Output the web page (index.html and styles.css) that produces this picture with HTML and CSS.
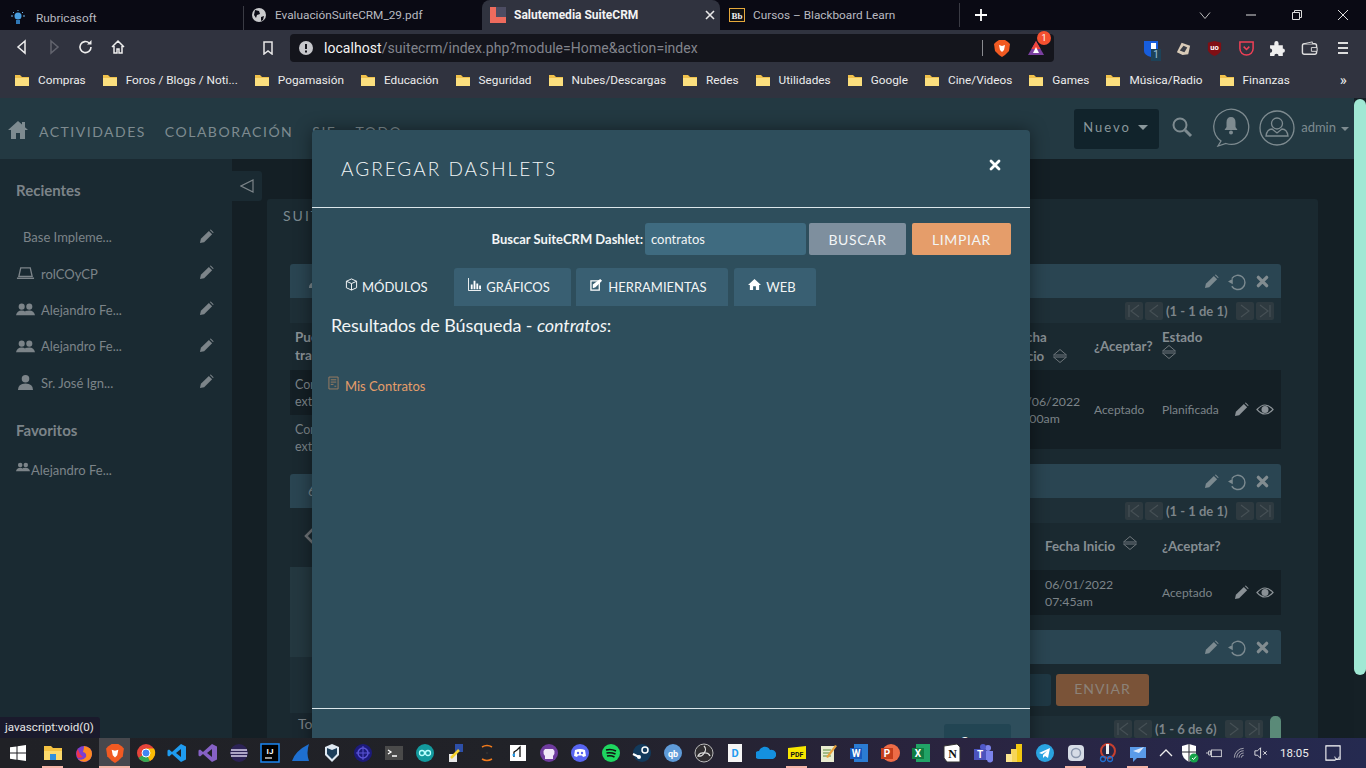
FILE: index.html
```html
<!DOCTYPE html>
<html>
<head>
  <title>Salutemedia SuiteCRM</title>
  <link rel="stylesheet" href="styles.css">
</head>
<body>
  <svg class="defs" width="0" height="0">
    <symbol id="folder" viewBox="0 0 16 16"><path d="M1 3h5l2 2h7v9H1z" fill="#f0c14b"/><path d="M1 6h14v8H1z" fill="#fbdf7e"/></symbol>
    <symbol id="pencil" viewBox="0 0 16 16"><path d="M1 15l1-4.500L10.500 2l3.500 3.500L5.500 14z" fill="currentColor"/><path d="M11.500 1l1-.5 3 3-.5 1z" fill="currentColor"/></symbol>
    <symbol id="refresh" viewBox="0 0 20 20"><path d="M4 7a7.500 7.500 0 1 1 0 8" fill="none" stroke="currentColor" stroke-width="1.500"/><path d="M0 10l5-3v6z" fill="currentColor"/></symbol>
    <symbol id="cross" viewBox="0 0 14 14"><path d="M2.500 2.500l9 9M11.500 2.500l-9 9" stroke="currentColor" stroke-width="3.500" stroke-linecap="round"/></symbol>
    <symbol id="eye" viewBox="0 0 18 12"><path d="M1 6q8-9 16 0q-8 9-16 0z" fill="none" stroke="currentColor" stroke-width="1.200"/><circle cx="9" cy="6" r="3.500" fill="currentColor"/></symbol>
    <symbol id="sort" viewBox="0 0 14 14"><path d="M7 .5l6.500 5.500H.5zM.5 8h13L7 13.500z" fill="none" stroke="currentColor"/></symbol>
    <symbol id="first" viewBox="0 0 18 18"><path d="M4 3v12M14 3L6 9l8 6" fill="none" stroke="#465055" stroke-width="1.200"/></symbol>
    <symbol id="prev" viewBox="0 0 18 18"><path d="M13 3L5 9l8 6" fill="none" stroke="#465055" stroke-width="1.200"/></symbol>
    <symbol id="next" viewBox="0 0 18 18"><path d="M5 3l8 6-8 6" fill="none" stroke="#465055" stroke-width="1.200"/></symbol>
    <symbol id="last" viewBox="0 0 18 18"><path d="M14 3v12M4 3l8 6-8 6" fill="none" stroke="#465055" stroke-width="1.200"/></symbol>
    <symbol id="people" viewBox="0 0 20 14"><circle cx="6" cy="4" r="3.200" fill="currentColor"/><circle cx="14" cy="4" r="3.200" fill="currentColor"/><path d="M0 13q1-5 6-5t5 5zM11 13q-.5-3-1.500-4.500Q11 8 14 8q5 0 6 5z" fill="currentColor"/></symbol>
    <symbol id="person" viewBox="0 0 18 18"><circle cx="9" cy="5" r="4" fill="currentColor"/><path d="M1 17q0-7 8-7t8 7z" fill="currentColor"/></symbol>
  </svg>

  <div class="tabstrip">
    <div class="tab tab-first">
      <svg class="favicon" viewBox="0 0 16 16"><circle cx="8" cy="6" r="3.500" fill="#4a9fe0"/><path d="M6 10h4v4H6z" fill="#2f77b5"/><path d="M1 6h2M13 6h2M8 0v1M3 2l1 1M13 2l-1 1" stroke="#6fb5e8"/></svg>
      <span>Rubricasoft</span>
    </div>
    <div class="tab tab-second">
      <svg class="favicon" viewBox="0 0 16 16"><circle cx="8" cy="8" r="7" fill="#c9cacc"/><path d="M4 3l4 1 1 3-3 1-1 3-2-3zM10 10l3-1-1 4-2 1z" fill="#0b0b15"/></svg>
      <span>EvaluaciónSuiteCRM_29.pdf</span>
    </div>
    <div class="tab tab-active">
      <svg class="favicon" viewBox="0 0 16 16"><path d="M0 0h6v10h10v6H0z" fill="#ee6b5d"/><path d="M6 0h10v10H6z" fill="#4d4d63"/></svg>
      <span>Salutemedia SuiteCRM</span>
      <svg class="tab-close" viewBox="0 0 10 10"><path d="M1 1l8 8M9 1L1 9" stroke="#e8e8e8" stroke-width="1.600"/></svg>
    </div>
    <div class="tab tab-last">
      <svg class="favicon" viewBox="0 0 16 16"><rect x=".5" y="1.500" width="15" height="13" fill="#111" stroke="#e5a83b"/><text x="8" y="11.500" class="bb">Bb</text></svg>
      <span>Cursos – Blackboard Learn</span>
    </div>
    <svg class="new-tab" viewBox="0 0 12 12"><path d="M6 0v12M0 6h12" stroke="#fff" stroke-width="1.800"/></svg>
    <div class="win-controls">
      <svg viewBox="0 0 12 12"><path d="M1 3.500l5 6 5-6" fill="none" stroke="#bbb"/></svg>
      <svg viewBox="0 0 12 12"><path d="M1 6h10" stroke="#ddd"/></svg>
      <svg viewBox="0 0 12 12"><path d="M1.500 3.500h7v7h-7zM3.500 3.500v-2h7v7h-2" fill="none" stroke="#ddd"/></svg>
      <svg viewBox="0 0 12 12"><path d="M1 1l10 10M11 1L1 11" stroke="#ddd"/></svg>
    </div>
  </div>

  <div class="toolbar">
    <svg class="nav-ico" viewBox="0 0 16 16"><path d="M11 2L4 8l7 6z" fill="none" stroke="#eee" stroke-width="1.500"/></svg>
    <svg class="nav-ico" viewBox="0 0 16 16"><path d="M5 2l7 6-7 6z" fill="none" stroke="#62646e" stroke-width="1.500"/></svg>
    <svg class="nav-ico" viewBox="0 0 16 16"><path d="M13 8a5.500 5.500 0 1 1-1.800-4" fill="none" stroke="#eee" stroke-width="1.600"/><path d="M13.500 1v4.500H9z" fill="#eee"/></svg>
    <svg class="nav-ico" viewBox="0 0 16 16"><path d="M2 8l6-6 6 6M4 7v7h3v-4h2v4h3V7" fill="none" stroke="#eee" stroke-width="1.500"/></svg>
    <svg class="bookmark-ico" viewBox="0 0 12 14"><path d="M2 1h8v12l-4-3-4 3z" fill="none" stroke="#e8e8e8" stroke-width="1.500"/></svg>
    <div class="omnibox">
      <svg class="info-ico" viewBox="0 0 14 14"><circle cx="7" cy="7" r="7" fill="#c6c7cb"/><path d="M6 3h2v5H6zM6 9.500h2v2H6z" fill="#14151c"/></svg>
      <span class="url"><b>localhost</b>/suitecrm/index.php?module=Home&amp;action=index</span>
      <span class="omni-sep"></span>
      <svg class="brave-ico" viewBox="0 0 16 18"><path d="M2 3l3-2h6l3 2 2 2-1 7-4 4-3 2-3-2-4-4L0 5z" fill="#f15a22"/><path d="M5 6l3 1 3-1-1 5-2 2-2-2z" fill="#fff"/></svg>
      <span class="rewards">
        <svg viewBox="0 0 18 16"><path d="M9 1l8 14H1z" fill="#7a3fa0"/><path d="M9 1l4.500 8h-9z" fill="#f0453a"/><path d="M9 7l3 6H6z" fill="#fff"/></svg>
        <span class="rewards-badge">1</span>
      </span>
    </div>
    <div class="extensions">
      <span class="ext ext-bw">
        <svg viewBox="0 0 16 18"><path d="M1 1h14v10q0 4-7 6-7-2-7-6z" fill="#175ddc"/><path d="M8 3h5v8q0 2-5 4z" fill="#fff"/></svg>
        <span class="ext-badge">1</span>
      </span>
      <svg class="ext" viewBox="0 0 18 16"><path d="M2 12L7 2l9 3-2 9-6 1z" fill="#d9cbb8"/><path d="M5 10l4-5 4 2-3 5z" fill="#3a3d46"/></svg>
      <svg class="ext" viewBox="0 0 16 18"><path d="M8 1l7 2v8q-2 4-7 6-5-2-7-6V3z" fill="#800f14"/><text x="8" y="11" class="ub">uo</text></svg>
      <svg class="ext" viewBox="0 0 18 18"><path d="M2 2h14v7a7 7 0 0 1-14 0z" fill="none" stroke="#ef4056" stroke-width="1.600"/><path d="M6 7l3 3 3-3" fill="none" stroke="#ef4056" stroke-width="1.600"/></svg>
      <svg class="ext" viewBox="0 0 16 16"><path d="M1 5h4V3a2 2 0 0 1 4 0v2h4v3a2 2 0 0 1 0 4v3H9a2 2 0 0 0-4 0H1v-3a2 2 0 0 0 0-4z" fill="#eee"/></svg>
      <svg class="ext" viewBox="0 0 18 16"><rect x="1.500" y="3" width="15" height="11" rx="2" fill="none" stroke="#ddd" stroke-width="1.500"/><path d="M3 3l9-2v2M11 7h6v4h-6z" fill="#30333f" stroke="#ddd"/></svg>
      <svg class="ext ext-menu" viewBox="0 0 14 14"><path d="M2 2h10M2 7h10M2 12h10" stroke="#ddd" stroke-width="1.800"/></svg>
    </div>
  </div>

  <div class="bookmarks">
    <span class="bm"><svg><use href="#folder"/></svg>Compras</span>
    <span class="bm"><svg><use href="#folder"/></svg>Foros / Blogs / Noti...</span>
    <span class="bm"><svg><use href="#folder"/></svg>Pogamasión</span>
    <span class="bm"><svg><use href="#folder"/></svg>Educación</span>
    <span class="bm"><svg><use href="#folder"/></svg>Seguridad</span>
    <span class="bm"><svg><use href="#folder"/></svg>Nubes/Descargas</span>
    <span class="bm"><svg><use href="#folder"/></svg>Redes</span>
    <span class="bm"><svg><use href="#folder"/></svg>Utilidades</span>
    <span class="bm"><svg><use href="#folder"/></svg>Google</span>
    <span class="bm"><svg><use href="#folder"/></svg>Cine/Videos</span>
    <span class="bm"><svg><use href="#folder"/></svg>Games</span>
    <span class="bm"><svg><use href="#folder"/></svg>Música/Radio</span>
    <span class="bm"><svg><use href="#folder"/></svg>Finanzas</span>
    <span class="bm-more">»</span>
  </div>

  <div class="app">
    <div class="crm">
      <div class="topnav">
        <svg class="home-ico" viewBox="0 0 20 20"><path d="M10 1L0 10h3v9h5v-6h4v6h5v-9h3l-3-2.700V2h-3v2.600z" fill="currentColor"/></svg>
        <a>ACTIVIDADES</a>
        <a>COLABORACIÓN</a>
        <a>SIE</a>
        <a>TODO</a>
        <div class="nav-right">
          <div class="nuevo"><span class="nuevo-text">Nuevo</span><span class="caret"></span></div>
          <svg class="search-ico" viewBox="0 0 22 22"><circle cx="9" cy="9" r="6.500" fill="none" stroke="currentColor" stroke-width="2"/><path d="M14 14l6 6" stroke="currentColor" stroke-width="3"/></svg>
          <svg class="bell-ico" viewBox="0 0 38 40"><path d="M9 34A17.500 17.500 0 1 1 14 36.500L6 39z" fill="none" stroke="currentColor" stroke-width="1.300"/><path d="M19 10q4.500 0 4.500 5.500v4.500l2 3h-13l2-3v-4.500q0-5.500 4.500-5.500z" fill="currentColor"/><circle cx="19" cy="25.500" r="2" fill="currentColor"/></svg>
          <svg class="user-ico" viewBox="0 0 36 36"><circle cx="18" cy="18" r="17" fill="none" stroke="currentColor" stroke-width="1.300"/><circle cx="18" cy="13.500" r="5.500" fill="none" stroke="currentColor" stroke-width="1.300"/><path d="M7 26q1-7 6-7l5 4 5-4q5 0 6 7z" fill="none" stroke="currentColor" stroke-width="1.300"/></svg>
          <span class="admin">admin<span class="caret caret-small"></span></span>
        </div>
      </div>

      <div class="crm-body">
        <aside class="sidebar">
          <h3>Recientes</h3>
          <div class="side-item side-plain"><span>Base Impleme...</span><svg class="side-pencil"><use href="#pencil"/></svg></div>
          <div class="side-item"><svg class="side-ico" viewBox="0 0 20 14"><path d="M5 1h10l2 9H3zM1 12h18" fill="none" stroke="currentColor" stroke-width="1.400"/></svg><span>rolCOyCP</span><svg class="side-pencil"><use href="#pencil"/></svg></div>
          <div class="side-item"><svg class="side-ico"><use href="#people"/></svg><span>Alejandro Fe...</span><svg class="side-pencil"><use href="#pencil"/></svg></div>
          <div class="side-item"><svg class="side-ico"><use href="#people"/></svg><span>Alejandro Fe...</span><svg class="side-pencil"><use href="#pencil"/></svg></div>
          <div class="side-item"><svg class="side-ico"><use href="#person"/></svg><span>Sr. José Ign...</span><svg class="side-pencil"><use href="#pencil"/></svg></div>
          <h3 class="side-fav">Favoritos</h3>
          <div class="fav-item"><svg class="fav-ico"><use href="#people"/></svg><span>Alejandro Fe...</span></div>
        </aside>

        <main class="content">
          <div class="toggle"><svg viewBox="0 0 14 14"><path d="M13 1v12L1 7z" fill="none" stroke="currentColor" stroke-width="1.200"/></svg></div>
          <div class="panel">
            <div class="panel-title">SUITECRM DASHBOARD</div>
            <div class="columns">
              <div class="col">
                <div class="dashlet">
                  <div class="dash-head"><svg class="dash-ico"><use href="#person"/></svg></div>
                  <div class="pager"></div>
                  <div class="left-head">Puesto de<br>trabajo</div>
                  <div class="left-row left-row-dark">Contrato<br>externo</div>
                  <div class="left-row">Contrato<br>externo</div>
                </div>
                <div class="dashlet">
                  <div class="dash-head"><span class="dash-letter">6</span></div>
                  <div class="cal-nav"><svg viewBox="0 0 10 16"><path d="M9 1L2 8l7 7" fill="none" stroke="currentColor" stroke-width="2.500"/></svg></div>
                  <div class="cal-box"></div>
                  <div class="cal-foot"></div>
                  <div class="cal-total">Total</div>
                </div>
              </div>

              <div class="col">
                <div class="dashlet">
                  <div class="dash-head dash-tools">
                    <svg class="tool-pencil"><use href="#pencil"/></svg>
                    <svg class="tool-refresh"><use href="#refresh"/></svg>
                    <svg class="tool-cross"><use href="#cross"/></svg>
                  </div>
                  <div class="pager">
                    <svg><use href="#first"/></svg><svg><use href="#prev"/></svg>
                    <span>(1 - 1 de 1)</span>
                    <svg class="pager-next"><use href="#next"/></svg><svg><use href="#last"/></svg>
                  </div>
                  <div class="t-head t-four">
                    <span></span>
                    <span class="th-sort">Fecha<br>Inicio<svg><use href="#sort"/></svg></span>
                    <span>¿Aceptar?</span>
                    <span class="th-stack">Estado<svg><use href="#sort"/></svg></span>
                    <span></span>
                  </div>
                  <div class="t-row t-four t-tall">
                    <span></span>
                    <span>01/06/2022<br>08:00am</span>
                    <span>Aceptado</span>
                    <span>Planificada</span>
                    <span class="acts"><svg class="act-pencil"><use href="#pencil"/></svg><svg class="act-eye"><use href="#eye"/></svg></span>
                  </div>
                </div>
                <div class="dashlet">
                  <div class="dash-head dash-tools">
                    <svg class="tool-pencil"><use href="#pencil"/></svg>
                    <svg class="tool-refresh"><use href="#refresh"/></svg>
                    <svg class="tool-cross"><use href="#cross"/></svg>
                  </div>
                  <div class="pager">
                    <svg><use href="#first"/></svg><svg><use href="#prev"/></svg>
                    <span>(1 - 1 de 1)</span>
                    <svg class="pager-next"><use href="#next"/></svg><svg><use href="#last"/></svg>
                  </div>
                  <div class="t-head t-three">
                    <span></span>
                    <span class="th-inline">Fecha Inicio<svg><use href="#sort"/></svg></span>
                    <span>¿Aceptar?</span>
                    <span></span>
                  </div>
                  <div class="t-row t-three">
                    <span></span>
                    <span>06/01/2022<br>07:45am</span>
                    <span>Aceptado</span>
                    <span class="acts"><svg class="act-pencil"><use href="#pencil"/></svg><svg class="act-eye"><use href="#eye"/></svg></span>
                  </div>
                </div>
                <div class="dashlet">
                  <div class="dash-head dash-tools">
                    <svg class="tool-pencil"><use href="#pencil"/></svg>
                    <svg class="tool-refresh"><use href="#refresh"/></svg>
                    <svg class="tool-cross"><use href="#cross"/></svg>
                  </div>
                  <div class="post-row"><span class="post-input"></span><span class="post-btn">ENVIAR</span></div>
                  <div class="pager pager-feed">
                    <svg><use href="#first"/></svg><svg><use href="#prev"/></svg>
                    <span>(1 - 6 de 6)</span>
                    <svg class="pager-next"><use href="#next"/></svg><svg><use href="#last"/></svg>
                    <i class="inner-thumb"></i>
                  </div>
                </div>
              </div>
            </div>
          </div>
        </main>
      </div>
    </div>
    <div class="scrollbar"><span class="thumb"></span></div>

    <div class="modal">
      <div class="modal-head">
        <h2>AGREGAR DASHLETS</h2>
        <svg class="modal-close" viewBox="0 0 14 14"><path d="M3 3l8 8M11 3l-8 8" stroke="#fff" stroke-width="2.800" stroke-linecap="round"/></svg>
      </div>
      <div class="modal-body">
        <div class="search-row">
          <label>Buscar SuiteCRM Dashlet:</label>
          <span class="search-input">contratos</span>
          <span class="btn btn-grey">BUSCAR</span>
          <span class="btn btn-orange">LIMPIAR</span>
        </div>
        <div class="modal-tabs">
          <span class="mtab mtab-active"><svg viewBox="0 0 14 14"><path d="M7 1l5.500 2.500v7L7 13l-5.500-2.500v-7zM1.500 3.500L7 6l5.500-2.500M7 6v7" fill="none" stroke="#fff"/></svg>MÓDULOS</span>
          <span class="mtab mtab-charts"><svg viewBox="0 0 14 14"><path d="M.5 0v13.500H14" fill="none" stroke="#fff"/><path d="M3 7h2v5H3zM6 3h2v9H6zM9 6h2v6H9zM12 8h2v4h-2z" fill="#fff"/></svg>GRÁFICOS</span>
          <span class="mtab mtab-tools"><svg viewBox="0 0 14 14"><path d="M1 3h9v10H1z" fill="none" stroke="#fff" stroke-width="1.400"/><path d="M3 7l8-6 2 2-7 7-3 1z" fill="#fff"/></svg>HERRAMIENTAS</span>
          <span class="mtab mtab-web"><svg viewBox="0 0 14 14"><path d="M7 1L0 7.500h2V13h3.500V9h3v4H12V7.500h2z" fill="#fff"/></svg>WEB</span>
        </div>
        <h4>Resultados de Búsqueda - <em>contratos</em>:</h4>
        <div class="result">
          <svg viewBox="0 0 12 14"><path d="M1 .5h10v13H1zM3 3.500h6M3 6h6M3 8.500h3M7 10.500h2" fill="none" stroke="#a07f63"/></svg>
          <a>Mis Contratos</a>
        </div>
      </div>
      <div class="modal-foot"><span class="foot-btn">Cerrar</span></div>
    </div>

    <div class="status">javascript:void(0)</div>
  </div>

  <div class="taskbar">
    <svg class="tb-win" viewBox="0 0 16 16"><path d="M0 2.300l6.500-.9v6.200H0zM7.500 1.300L16 0v7.600H7.500zM0 8.500h6.500v6.200L0 13.700zM7.500 8.500H16V16l-8.500-1.200z" fill="#fff"/></svg>
    <div class="tb-apps">
      <span class="tb tb-open"><svg viewBox="0 0 20 20"><path d="M1 3h7l2 2h9v12H1z" fill="#f5c242"/><path d="M1 8h18v9H1z" fill="#fbd96b"/><path d="M7 11h6v6H7z" fill="#2f8fdc"/></svg></span>
      <span class="tb"><svg viewBox="0 0 20 20"><circle cx="10" cy="11" r="8" fill="#7b3fd0"/><path d="M10 3q8 1 8 8a8 8 0 0 1-14 5q5 2 8-2 1-4-3-5 1-3 1-6z" fill="#ff8a1f"/><path d="M4 15q-3-5 0-9 1 5 5 8z" fill="#f2344b"/></svg></span>
      <span class="tb tb-open tb-focus"><svg viewBox="0 0 16 18"><path d="M2 3l3-2h6l3 2 2 2-1 7-4 4-3 2-3-2-4-4L0 5z" fill="#f15a22"/><path d="M5 6l3 1 3-1-1 5-2 2-2-2z" fill="#fff"/></svg></span>
      <span class="tb"><svg viewBox="0 0 20 20"><circle cx="10" cy="10" r="9" fill="#e5443a"/><path d="M10 10L2.500 15A9 9 0 0 0 14 18z" fill="#34a853"/><path d="M10 10l4 8a9 9 0 0 0 4-12.500H10z" fill="#fbbc05"/><circle cx="10" cy="10" r="4" fill="#4285f4" stroke="#fff"/></svg></span>
      <span class="tb"><svg viewBox="0 0 20 20"><path d="M14 1l5 2.500v13L14 19 5 11l-3 2.500-1.500-1V7.500l1.500-1L5 9zM14 6l-5 4 5 4z" fill="#1f9cf0"/></svg></span>
      <span class="tb"><svg viewBox="0 0 20 20"><path d="M14 1l5 2.500v13L14 19 5 11l-3 2.500-1.500-1V7.500l1.500-1L5 9zM14 6l-5 4 5 4z" fill="#8661c5"/></svg></span>
      <span class="tb"><svg viewBox="0 0 20 20"><circle cx="10" cy="10" r="9" fill="#2c2255"/><path d="M2 7h16M1.500 10h17M2 13h16" stroke="#d6d0ea" stroke-width="1.300"/></svg></span>
      <span class="tb"><svg viewBox="0 0 20 20"><rect x="1" y="1" width="18" height="18" fill="#000" stroke="#1b86f2" stroke-width="1.500"/><text x="10" y="11" class="ij">IJ</text><path d="M5 15h7" stroke="#fff" stroke-width="1.200"/></svg></span>
      <span class="tb"><svg viewBox="0 0 20 20"><path d="M1 18Q4 8 18 1q-3 9 0 17z" fill="#1e6fd0"/></svg></span>
      <span class="tb"><svg viewBox="0 0 20 20"><path d="M10 1l7 3v8l-7 7-7-7V4z" fill="#dfe9f2"/><path d="M5 5l5 2 5-2v6l-5 5-5-5z" fill="#1c3e5a"/></svg></span>
      <span class="tb"><svg viewBox="0 0 20 20"><circle cx="10" cy="10" r="9" fill="#1c1a7a"/><circle cx="10" cy="10" r="5" fill="none" stroke="#5a54d6" stroke-width="1.500"/><path d="M10 3v14M3 10h14" stroke="#5a54d6"/></svg></span>
      <span class="tb"><svg viewBox="0 0 20 20"><path d="M1 3h18v14H1z" fill="#4a4a4a"/><path d="M4 7l3 2-3 2M8 13h5" fill="none" stroke="#fff" stroke-width="1.300"/></svg></span>
      <span class="tb"><svg viewBox="0 0 20 20"><circle cx="10" cy="10" r="9" fill="#139a9e"/><circle cx="7" cy="10" r="2.500" fill="none" stroke="#bff" stroke-width="1.300"/><circle cx="13" cy="10" r="2.500" fill="none" stroke="#bff" stroke-width="1.300"/></svg></span>
      <span class="tb"><svg viewBox="0 0 20 20"><path d="M9 1h8v8H9z" fill="#2d4fa8"/><path d="M3 11h8v8H3z" fill="#e8e8e8"/><path d="M5 15l8-8" stroke="#f6d32d" stroke-width="2.500"/></svg></span>
      <span class="tb"><svg viewBox="0 0 20 20"><path d="M5 4q5-3 10 0M5 16q5 3 10 0" fill="none" stroke="#f07a1c" stroke-width="1.500"/><circle cx="10" cy="10" r="1" fill="#333"/></svg></span>
      <span class="tb"><svg viewBox="0 0 20 20"><path d="M2 2h16v16H2z" fill="#fff"/><path d="M6 14V9l3-2 3-3v10" fill="none" stroke="#111" stroke-width="1.300"/><path d="M4 12l3-2v4z" fill="#1f9cf0"/></svg></span>
      <span class="tb"><svg viewBox="0 0 20 20"><circle cx="10" cy="10" r="9" fill="#6e3b9e"/><path d="M6 16v-3q-2-2-1.500-5L6 6h8l1.500 2q.5 3-1.500 5v3z" fill="#f0e8f8"/></svg></span>
      <span class="tb"><svg viewBox="0 0 20 20"><circle cx="10" cy="10" r="9" fill="#5865f2"/><path d="M5 7q5-2 10 0l1 6-3 1-1-1.500H8L7 14l-3-1z" fill="#fff"/><circle cx="8" cy="10" r="1.200" fill="#5865f2"/><circle cx="12" cy="10" r="1.200" fill="#5865f2"/></svg></span>
      <span class="tb"><svg viewBox="0 0 20 20"><circle cx="10" cy="10" r="9" fill="#1ed760"/><path d="M5 7q5-1.500 10 1M5.500 10q4.500-1 9 1M6 13q4-1 7.500 1" fill="none" stroke="#111" stroke-width="1.500"/></svg></span>
      <span class="tb"><svg viewBox="0 0 20 20"><circle cx="10" cy="10" r="9" fill="#123a5c"/><circle cx="13" cy="7" r="3" fill="none" stroke="#fff" stroke-width="1.500"/><path d="M1 11l6 3" stroke="#fff" stroke-width="2"/><circle cx="7" cy="14" r="2" fill="#fff"/></svg></span>
      <span class="tb"><svg viewBox="0 0 20 20"><circle cx="10" cy="10" r="9" fill="#5f9bd8"/><text x="10" y="13.500" class="qb">qb</text></svg></span>
      <span class="tb"><svg viewBox="0 0 20 20"><circle cx="10" cy="10" r="9" fill="#302e31" stroke="#bbb"/><path d="M10 3a5 5 0 0 1 0 7 5 5 0 0 1-6 3 5 5 0 0 1 6-3 5 5 0 0 1 6 3" fill="none" stroke="#ddd" stroke-width="1.300"/></svg></span>
      <span class="tb"><svg viewBox="0 0 20 20"><path d="M3 1h14v18H3z" fill="#f5f5f5"/><text x="10" y="14" class="dk">D</text></svg></span>
      <span class="tb"><svg viewBox="0 0 20 20"><path d="M3 16a4 4 0 0 1 0-8 6 6 0 0 1 11-1 4.500 4.500 0 0 1 3 9z" fill="#1490df"/></svg></span>
      <span class="tb tb-open"><svg viewBox="0 0 20 20"><path d="M1 5l18-2v13H1z" fill="#f7e600"/><text x="10" y="14" class="pdf">PDF</text></svg></span>
      <span class="tb"><svg viewBox="0 0 20 20"><path d="M3 3h13v16H3z" fill="#e9ecd0"/><path d="M5 7h8M5 10h8M5 13h8" stroke="#5b8a3a"/><path d="M8 14L17 2l2 1-9 12z" fill="#e8a33d"/></svg></span>
      <span class="tb"><svg viewBox="0 0 20 20"><path d="M5 1h14v18H5z" fill="#2b7cd3"/><path d="M1 5h12v11H1z" fill="#185abd"/><text x="7" y="14" class="oft">W</text></svg></span>
      <span class="tb"><svg viewBox="0 0 20 20"><circle cx="11" cy="10" r="9" fill="#ed6c47"/><path d="M1 5h12v11H1z" fill="#c43e1c"/><text x="7" y="14" class="oft">P</text></svg></span>
      <span class="tb"><svg viewBox="0 0 20 20"><path d="M5 1h14v18H5z" fill="#21a366"/><path d="M1 5h12v11H1z" fill="#107c41"/><text x="7" y="14" class="oft">X</text></svg></span>
      <span class="tb"><svg viewBox="0 0 20 20"><path d="M2 3l13-2 3 3v15H5l-3-4z" fill="#fff" stroke="#333"/><text x="10.500" y="15" class="ntn">N</text></svg></span>
      <span class="tb"><svg viewBox="0 0 20 20"><circle cx="15" cy="5" r="3" fill="#7b83eb"/><path d="M9 8h11v8a3 3 0 0 1-6 1H9z" fill="#7b83eb"/><circle cx="10" cy="4" r="3" fill="#5059c9"/><path d="M1 6h12v11H1z" fill="#4b53bc"/><text x="7" y="14.500" class="oft">T</text></svg></span>
      <span class="tb"><svg viewBox="0 0 20 20"><path d="M12 1h6v18h-6z" fill="#f2c811"/><path d="M7 6h6v13H7z" fill="#f6d658"/><path d="M2 11h6v8H2z" fill="#fbe58f"/></svg></span>
      <span class="tb"><svg viewBox="0 0 20 20"><circle cx="10" cy="10" r="9" fill="#2aa3e0"/><path d="M4 10l11-5-2 10-3-2-2 2v-3l4-4-5 3z" fill="#fff"/></svg></span>
      <span class="tb tb-open"><svg viewBox="0 0 20 20"><rect x="2" y="2" width="16" height="16" rx="4" fill="#d6dce6"/><circle cx="10" cy="10" r="4.500" fill="none" stroke="#8a97ad" stroke-width="1.500"/></svg></span>
      <span class="tb"><svg viewBox="0 0 20 20"><circle cx="11" cy="8" r="7" fill="none" stroke="#c8402f" stroke-width="2"/><path d="M9 1h3v10H9z" fill="#eee"/><circle cx="6" cy="16" r="2.500" fill="none" stroke="#1f6fd0" stroke-width="1.300"/><circle cx="13" cy="16" r="2.500" fill="none" stroke="#1f6fd0" stroke-width="1.300"/></svg></span>
      <span class="tb tb-open"><svg viewBox="0 0 20 20"><path d="M2 4h16v11H9l-4 4v-4H2z" fill="#5a9be8"/><path d="M5 8l11-4-5 6z" fill="#dbe9fb"/></svg></span>
    </div>
    <div class="tray">
      <svg class="tray-up" viewBox="0 0 14 10"><path d="M1 8l6-6 6 6" fill="none" stroke="#eee" stroke-width="1.300"/></svg>
      <svg class="tray-shield" viewBox="0 0 18 20"><path d="M8 1l7 2v7q0 5-7 9-7-4-7-9V3z" fill="#fff"/><path d="M8 1v18M1 9h14" stroke="#23252c"/><circle cx="13" cy="15" r="4.500" fill="#16a34a"/><path d="M11 15l1.500 1.500 2.500-3" fill="none" stroke="#fff"/></svg>
      <svg class="tray-power" viewBox="0 0 24 16"><rect x="8" y="3.500" width="15" height="10" fill="none" stroke="#eee" stroke-width="1.200"/><path d="M0 8h4M4 5h3v6H4zM7 6.500h1M7 9.500h1" fill="none" stroke="#eee" stroke-width="1.200"/></svg>
      <svg class="tray-wifi" viewBox="0 0 18 18"><path d="M2 16a14 14 0 0 1 14-14M5.500 16a10.500 10.500 0 0 1 10.500-10.500M9 16a7 7 0 0 1 7-7M12.500 16a3.500 3.500 0 0 1 3.500-3.500" fill="none" stroke="#ddd"/></svg>
      <svg class="tray-vol" viewBox="0 0 16 16"><path d="M1 5.500h3L7.500 2v12L4 10.500H1z" fill="none" stroke="#eee"/><path d="M10.500 6l4 4M14.500 6l-4 4" stroke="#eee"/></svg>
      <span class="clock">18:05</span>
      <svg class="tray-notif" viewBox="0 0 18 18"><path d="M1 1h16v15h-4l-2 1H1z" fill="none" stroke="#fff" stroke-width="1.200"/><path d="M11 13q0 3 3 3 2-1 2-3" fill="none" stroke="#fff"/></svg>
    </div>
  </div>
</body>
</html>
```
FILE: styles.css
```css
* {
  box-sizing: border-box;
}

html, body {
  margin: 0;
  height: 768px;
  overflow: hidden;
}

body {
  display: flex;
  flex-direction: column;
  font-family: Lato, sans-serif;
  background: #141f25;
}

.defs {
  position: absolute;
}

/* browser tabs */
.tabstrip {
  height: 30px;
  flex: none;
  display: flex;
  background: #0a0a14;
  font-family: Roboto, sans-serif;
  font-size: 11.800px;
  color: #b9bac0;
}

.tab {
  display: flex;
  align-items: center;
  height: 30px;
}

.tab-first {
  width: 244px;
  padding-left: 10px;
  border-right: 1px solid #3a3b44;
  margin: 6px 0 0;
  height: 24px;
}

.tab-first span {
  margin-left: 10px;
}

.tab-second {
  width: 238px;
  padding-left: 7px;
}

.tab-second span {
  margin-left: 8px;
}

.favicon {
  width: 16px;
  height: 16px;
  flex: none;
}

.tab-active {
  width: 238px;
  padding: 0 5px 0 8px;
  background: #30333f;
  border-radius: 8px 8px 0 0;
  color: #f2f2f2;
  font-size: 12px;
  font-weight: 700;
}

.tab-active span {
  margin-left: 8px;
  flex: 1;
}

.tab-close {
  width: 10px;
  height: 10px;
}

.tab-last {
  width: 240px;
  padding-left: 9px;
  border-right: 1px solid #3a3b44;
  height: 24px;
  margin-top: 3px;
}

.tab-last span {
  margin-left: 8px;
}

.bb {
  font: 700 9px "Liberation Serif", serif;
  fill: #eee;
  text-anchor: middle;
}

.new-tab {
  width: 12px;
  height: 12px;
  margin: 9px 0 0 15px;
}

.win-controls {
  margin-left: auto;
  display: flex;
  gap: 34px;
  padding: 9px 17px 0 0;
}

.win-controls svg {
  width: 12px;
  height: 12px;
}

/* browser toolbar */
.toolbar {
  height: 32px;
  flex: none;
  display: flex;
  align-items: flex-end;
  background: #30333f;
  padding-left: 14px;
}

.nav-ico {
  width: 16px;
  height: 16px;
  margin: 0 16px 7px 0;
}

.bookmark-ico {
  width: 12px;
  height: 14px;
  margin: 0 16px 7px 120px;
}

.omnibox {
  width: 764px;
  height: 28px;
  display: flex;
  align-items: center;
  background: #14151c;
  border-radius: 4px;
  padding-left: 9px;
}

.info-ico {
  width: 14px;
  height: 14px;
  flex: none;
}

.url {
  margin-left: 11px;
  font-family: Roboto, sans-serif;
  font-size: 14px;
  letter-spacing: .05px;
  color: #82848c;
  width: 658px;
  flex: none;
}

.url b {
  font-weight: 400;
  color: #f4f4f4;
}

.omni-sep {
  width: 1px;
  height: 16px;
  background: #8a8b90;
  flex: none;
}

.brave-ico {
  width: 16px;
  height: 18px;
  margin-left: 11px;
}

.rewards {
  position: relative;
  margin-left: 17px;
  display: flex;
}

.rewards svg {
  width: 18px;
  height: 16px;
}

.rewards-badge {
  position: absolute;
  left: 10px;
  top: -9px;
  width: 14px;
  height: 14px;
  border-radius: 50%;
  background: #f4502f;
  color: #fff;
  font: 9px/14px Roboto, sans-serif;
  text-align: center;
}

.extensions {
  display: flex;
  align-items: center;
  height: 28px;
  margin-left: 89px;
  gap: 14.500px;
}

.ext {
  width: 17px;
  height: 17px;
  flex: none;
  position: relative;
}

.ext-bw svg {
  width: 16px;
  height: 18px;
}

.ext-badge {
  position: absolute;
  left: 8px;
  top: 9px;
  width: 10px;
  height: 12px;
  background: #1d4258;
  color: #9fc3d8;
  font: 10px/12px Roboto, sans-serif;
  text-align: center;
}

.ub {
  font: 700 8px Roboto, sans-serif;
  fill: #fff;
  text-anchor: middle;
}

.ext-menu {
  width: 14px;
  height: 14px;
  margin-left: 4px;
}

/* bookmarks bar */
.bookmarks {
  height: 36px;
  flex: none;
  display: flex;
  align-items: center;
  gap: 16px;
  padding: 0 0 0 14px;
  background: #30333f;
  font-family: Roboto, sans-serif;
  font-size: 11.800px;
  color: #ececec;
}

.bm {
  display: flex;
  align-items: center;
  gap: 8px;
  white-space: nowrap;
}

.bm svg {
  width: 16px;
  height: 16px;
}

.bm-more {
  margin-left: 34px;
  font-size: 15px;
}

/* the crm page behind the dialog */
.app {
  flex: 1;
  min-height: 0;
  position: relative;
  display: flex;
  overflow: hidden;
}

.crm {
  flex: 1;
  min-width: 0;
  display: flex;
  flex-direction: column;
}

.topnav {
  height: 61px;
  flex: none;
  display: flex;
  align-items: center;
  background: #233942;
  color: #7e8b90;
  padding: 5px 0 0 8px;
}

.topnav a {
  font-size: 14px;
  letter-spacing: 1.500px;
  margin-right: 19px;
  white-space: nowrap;
}

.home-ico {
  width: 20px;
  height: 20px;
  margin: -2px 11px 0 0;
}

.nav-right {
  margin-left: auto;
  margin-top: -4px;
  display: flex;
  align-items: center;
  padding-right: 5px;
}

.nuevo {
  width: 85px;
  height: 40px;
  display: flex;
  align-items: center;
  padding-left: 9px;
  background: #11232b;
  border-radius: 3px;
  font-size: 13px;
  letter-spacing: 2px;
  color: #8a979b;
}

.nuevo-text {
  margin-top: -4px;
}

.caret {
  width: 0;
  height: 0;
  margin: -4px 0 0 7px;
  border: 5px solid transparent;
  border-top: 5px solid #8a979b;
  border-bottom: 0;
}

.caret-small {
  display: inline-block;
  border-width: 4px;
  border-bottom: 0;
  border-top-color: #7e8b90;
  margin: 0 0 0 5px;
  vertical-align: 1px;
}

.search-ico {
  width: 22px;
  height: 22px;
  margin: -4px 0 0 12px;
}

.bell-ico {
  width: 38px;
  height: 40px;
  margin: -5px 0 0 19px;
}

.user-ico {
  width: 36px;
  height: 36px;
  margin: -3px 0 0 9px;
}

.admin {
  font-size: 13px;
  margin: -4px 0 0 6px;
  white-space: nowrap;
}

.crm-body {
  flex: 1;
  min-height: 0;
  display: flex;
}

.sidebar {
  width: 232px;
  flex: none;
  background: #1a2a32;
  color: #7c8489;
  padding: 0 18px 0 16px;
  font-size: 13px;
}

.sidebar h3 {
  margin: 22px 0 19px;
  font-size: 15px;
  line-height: 19px;
}

.sidebar .side-fav {
  margin: 20px 0 22px;
}

.side-item {
  height: 36.400px;
  display: flex;
  align-items: center;
  gap: 6px;
}

.side-item span {
  flex: 1;
}

.side-plain {
  padding-left: 7px;
}

.side-ico {
  width: 19px;
  height: 17px;
  flex: none;
}

.side-pencil {
  width: 15px;
  height: 15px;
  flex: none;
  color: #7c8489;
  margin-top: -2px;
}

.fav-item {
  display: flex;
  align-items: center;
  gap: 1px;
}

.fav-ico {
  width: 14px;
  height: 10px;
  margin-top: -5px;
}

.content {
  flex: 1;
  min-width: 0;
  display: flex;
  align-items: flex-start;
  background: #141f25;
}

.toggle {
  width: 30px;
  height: 30px;
  flex: none;
  margin-top: 12px;
  display: flex;
  align-items: center;
  justify-content: center;
  background: #1a2a32;
  border-radius: 0 3px 3px 0;
  color: #7c8489;
}

.toggle svg {
  width: 14px;
  height: 14px;
}

.panel {
  flex: 1;
  min-width: 0;
  height: 600px;
  margin: 40px 36px 0 5px;
  padding: 0 37px 0 23px;
  background: #1a2930;
  border-radius: 3px 3px 0 0;
}

.panel-title {
  height: 65px;
  margin-left: -7px;
  padding-top: 8px;
  font-size: 14px;
  letter-spacing: 2px;
  color: #7c8a90;
  white-space: nowrap;
}

.columns {
  display: grid;
  grid-template-columns: 360px 616px;
  gap: 15px;
}

.col {
  display: flex;
  flex-direction: column;
}

.dashlet {
  margin-bottom: 15px;
}

.col:first-child .dashlet {
  margin-bottom: 14px;
}

.dash-head {
  height: 34px;
  display: flex;
  align-items: center;
  padding-left: 18px;
  background: #2a4552;
  border-radius: 3px 3px 0 0;
  color: #7c8a90;
}

.dash-ico {
  width: 16px;
  height: 16px;
}

.dash-letter {
  font-size: 13px;
}

.dash-tools {
  justify-content: flex-end;
  padding: 0 12px 0 0;
  gap: 9px;
}

.tool-pencil {
  width: 15px;
  height: 15px;
}

.tool-refresh {
  width: 19px;
  height: 19px;
}

.tool-cross {
  width: 13px;
  height: 13px;
  color: #828c90;
}

.pager {
  height: 25px;
  display: flex;
  align-items: center;
  justify-content: flex-end;
  gap: 2px;
  padding-right: 7px;
  background: #1e2f37;
  font-size: 13px;
  font-weight: 700;
  color: #7c8489;
}

.pager svg {
  width: 18px;
  height: 18px;
  background: #2e3a40;
  border-radius: 2px;
  flex: none;
}

.pager span {
  width: 60px;
  margin: 0 1px;
  text-align: center;
  white-space: nowrap;
}

.pager .pager-next {
  margin-left: 7px;
}

.pager-feed {
  padding-right: 18px;
  position: relative;
}

.inner-thumb {
  position: absolute;
  right: 0;
  top: 0;
  width: 11px;
  height: 30px;
  background: #5a8a78;
  border-radius: 5px 5px 0 0;
}

.left-head {
  height: 47px;
  padding: 5px 0 0 5px;
  font-size: 13.500px;
  line-height: 18px;
  font-weight: 700;
  color: #8a9196;
}

.left-row {
  height: 45px;
  padding: 6px 5px 0;
  font-size: 12.500px;
  line-height: 17px;
  color: #7c8489;
}

.left-row-dark {
  background: #141f25;
}

.cal-nav {
  height: 59px;
  display: flex;
  align-items: center;
  padding: 0 0 4px 14px;
  color: #6f7478;
}

.cal-nav svg {
  width: 10px;
  height: 16px;
}

.cal-box {
  height: 90px;
  background: #243840;
}

.cal-foot {
  height: 56px;
  background: #1e2f37;
}

.cal-total {
  height: 40px;
  padding: 2px 0 0 8px;
  background: #1a2830;
  font-size: 14px;
  color: #7c8489;
}

.t-head, .t-row {
  display: grid;
  align-items: center;
  color: #7c8489;
}

.t-head {
  height: 47px;
  font-size: 13.300px;
  line-height: 19px;
  font-weight: 700;
  color: #868e93;
}

.t-row {
  height: 45px;
  background: #141f25;
  font-size: 12px;
  line-height: 17px;
}

.t-tall {
  height: 79px;
}

.t-four {
  grid-template-columns: 1fr 82px 68px 70px 49px;
}

.t-three {
  grid-template-columns: 1fr 117px 70px 49px;
}

.t-row > span:nth-child(2) {
  font-size: 12.300px;
}

.th-sort svg, .th-inline svg, .th-stack svg {
  width: 14px;
  height: 14px;
  font-weight: 400;
  color: #6f777c;
}

.th-sort svg {
  margin-left: 9px;
  vertical-align: -2px;
}

.th-inline {
  display: flex;
  align-items: center;
}

.th-inline svg {
  margin: -8px 0 0 8px;
}

.th-stack {
  margin-top: -4px;
  line-height: 15px;
}

.th-stack svg {
  display: block;
}

.acts {
  display: flex;
  align-items: center;
  gap: 7px;
  padding-left: 2px;
  color: #8a9196;
}

.act-pencil {
  width: 15px;
  height: 15px;
}

.act-eye {
  width: 18px;
  height: 13px;
}

.post-row {
  height: 52px;
  display: flex;
  align-items: flex-start;
  gap: 5px;
  padding-top: 10px;
  background: #1a2930;
}

.post-input {
  width: 386px;
  height: 32px;
  background: #1f3844;
  border-radius: 3px;
}

.post-btn {
  width: 93px;
  height: 32px;
  display: flex;
  align-items: center;
  justify-content: center;
  padding-bottom: 3px;
  background: #7a5338;
  border-radius: 3px;
  color: #8c8278;
  font-size: 14px;
  letter-spacing: 1px;
}

.scrollbar {
  width: 12px;
  flex: none;
  background: #152026;
  padding-top: 1px;
}

.thumb {
  display: block;
  height: 576px;
  background: #a0e8d4;
  border-radius: 6px;
}

/* add dashlets dialog */
.modal {
  position: absolute;
  left: 312px;
  top: 32px;
  width: 718px;
  height: 640px;
  display: flex;
  flex-direction: column;
  background: #2e4e5c;
  border-radius: 4px 4px 0 0;
  box-shadow: 0 0 18px rgba(0, 0, 0, .45);
  color: #f2f5f6;
}

.modal-head {
  height: 78px;
  flex: none;
  display: flex;
  justify-content: space-between;
  padding: 0 29px;
  border-bottom: 1px solid #dbe6ea;
}

.modal-head h2 {
  margin: 27px 0 0;
  font-size: 19px;
  line-height: 24px;
  font-weight: 300;
  letter-spacing: 2px;
  color: #f0f4f5;
}

.modal-close {
  width: 14px;
  height: 14px;
  margin: 28px -1px 0 0;
}

.modal-body {
  flex: 1;
  padding: 15px 19px 0 19px;
  border-bottom: 1px solid #dbe6ea;
  font-size: 13px;
}

.search-row {
  display: flex;
  align-items: center;
  justify-content: flex-end;
}

.search-row label {
  font-weight: 700;
  margin-right: 2px;
  font-size: 13px;
}

.search-input {
  width: 161px;
  height: 32px;
  padding-left: 6px;
  line-height: 32px;
  background: #3f6b80;
  border-radius: 3px;
  margin-right: 3px;
  font-size: 13px;
}

.btn {
  height: 32px;
  display: flex;
  align-items: center;
  justify-content: center;
  border-radius: 2px;
  font-size: 14px;
  letter-spacing: .6px;
}

.btn-grey {
  width: 97px;
  background: #7e8f9e;
  margin-right: 6px;
}

.btn-orange {
  width: 99px;
  background: #e59d6a;
}

.modal-tabs {
  display: flex;
  height: 38px;
  margin-top: 13px;
  gap: 5px;
}

.mtab {
  display: flex;
  align-items: center;
  justify-content: center;
  gap: 5px;
  background: #395f72;
  border-radius: 3px 3px 0 0;
  font-size: 13px;
}

.mtab svg {
  width: 13px;
  height: 13px;
  margin-top: -6px;
}

.mtab-active {
  width: 118px;
  background: none;
  justify-content: flex-start;
  gap: 4px;
  padding-left: 14px;
}

.mtab-charts {
  width: 117px;
  padding-right: 7px;
}

.mtab-tools {
  width: 152px;
  padding-right: 7px;
}

.mtab-web {
  width: 82px;
  margin-left: 1px;
  padding-right: 6px;
}

.modal-body h4 {
  margin: 8px 0 0;
  font-size: 18px;
  line-height: 22px;
  font-weight: 400;
  letter-spacing: -.1px;
}

.result {
  display: flex;
  align-items: center;
  gap: 6px;
  margin: 42px 0 0 -3px;
}

.result svg {
  width: 11px;
  height: 14px;
  margin-top: -6px;
}

.result a {
  color: #e59d6a;
  font-size: 13px;
}

.modal-foot {
  height: 61px;
  flex: none;
  padding: 15px 19px 0 0;
  display: flex;
  justify-content: flex-end;
}

.foot-btn {
  width: 67px;
  height: 32px;
  padding-top: 10px;
  text-align: center;
  background: #224553;
  border-radius: 3px;
  font-size: 13px;
}

.status {
  position: absolute;
  left: 0;
  bottom: 0;
  width: 100px;
  height: 21px;
  padding-left: 5px;
  background: #1a1a2c;
  border-radius: 0 3px 0 0;
  font: 11.600px/21px Roboto, sans-serif;
  color: #e6e6e6;
}

/* windows taskbar */
.taskbar {
  height: 30px;
  flex: none;
  display: flex;
  align-items: center;
  background: linear-gradient(90deg, #202126 0%, #212228 40%, #2a2440 70%, #252a50 100%);
  position: relative;
}

.tb-win {
  width: 16px;
  height: 16px;
  margin: 0 11px 0 10px;
  flex: none;
}

.tb-apps {
  display: flex;
  height: 30px;
}

.tb {
  width: 31px;
  height: 30px;
  display: flex;
  align-items: center;
  justify-content: center;
  position: relative;
}

.tb svg {
  width: 20px;
  height: 20px;
}

.tb-open::after {
  content: "";
  position: absolute;
  left: 5px;
  right: 5px;
  bottom: 0;
  height: 2px;
  background: #f5b5a8;
}

.tb-focus {
  background: #47484d;
}

.tb-focus::after {
  left: 0;
  right: 0;
}

.ij {
  font: 700 8px Roboto, sans-serif;
  fill: #fff;
  text-anchor: middle;
}

.qb {
  font: 700 9px Roboto, sans-serif;
  fill: #fff;
  text-anchor: middle;
}

.dk {
  font: 700 11px Roboto, sans-serif;
  fill: #1f9cf0;
  text-anchor: middle;
}

.pdf {
  font: 700 7px Roboto, sans-serif;
  fill: #111;
  text-anchor: middle;
}

.oft {
  font: 700 10px Roboto, sans-serif;
  fill: #fff;
  text-anchor: middle;
}

.ntn {
  font: 700 12px "Liberation Serif", serif;
  fill: #111;
  text-anchor: middle;
}

.tray {
  margin-left: auto;
  display: flex;
  align-items: center;
  padding-right: 25px;
  color: #eee;
}

.tray-up {
  width: 14px;
  height: 10px;
}

.tray-shield {
  width: 18px;
  height: 20px;
  margin-left: 8px;
}

.tray-power {
  width: 16px;
  height: 16px;
  margin-left: 7px;
}

.tray-wifi {
  width: 12px;
  height: 14px;
  margin-left: 11px;
}

.tray-vol {
  width: 14px;
  height: 14px;
  margin-left: 9px;
}

.clock {
  width: 27px;
  font: 11.500px Roboto, sans-serif;
  margin-left: 12px;
  white-space: nowrap;
}

.tray-notif {
  width: 16px;
  height: 16px;
  margin-left: 18px;
}
```
